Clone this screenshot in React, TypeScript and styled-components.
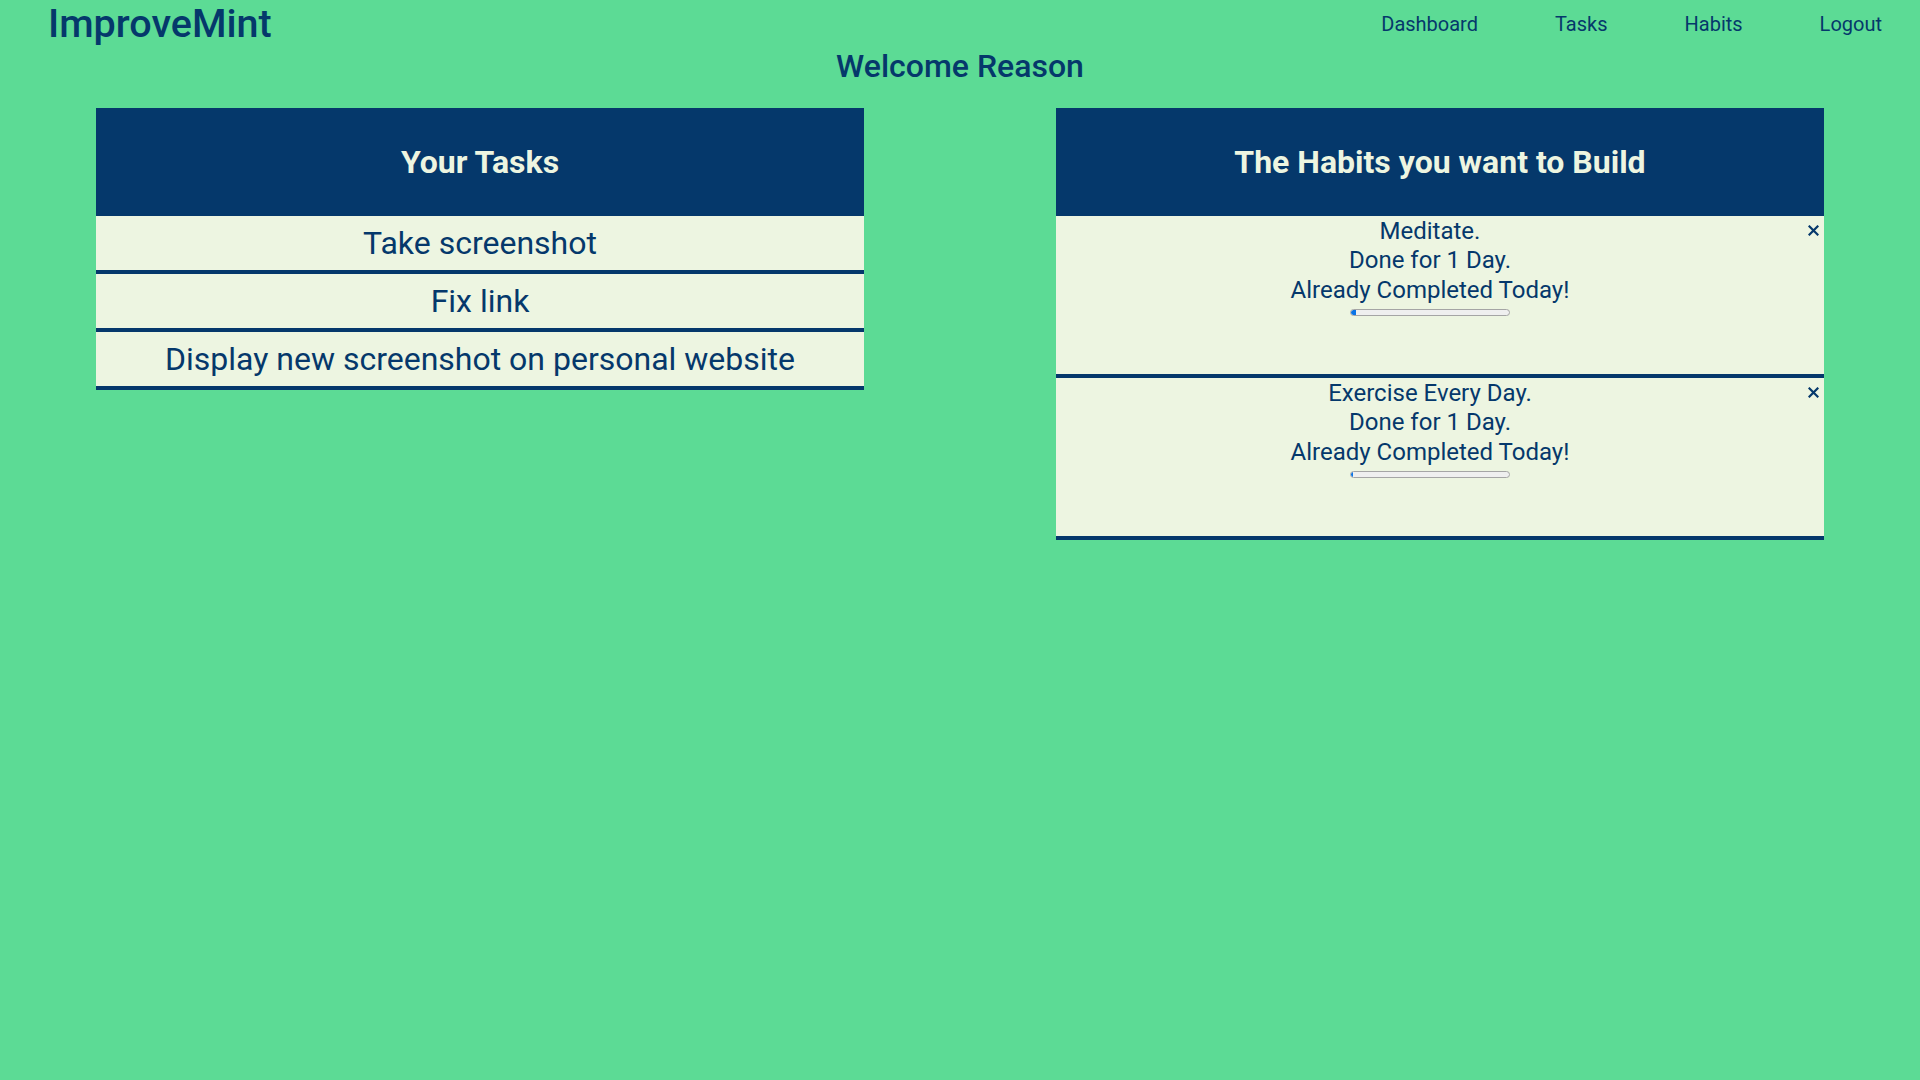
import React from "react";
import styled, { createGlobalStyle } from "styled-components";

const GlobalStyle = createGlobalStyle`
  html, body {
    margin: 0;
    padding: 0;
    background: #5cdb95;
    font-family: Roboto, "Liberation Sans", Arial, sans-serif;
    color: #05386b;
  }
  * { box-sizing: border-box; }
`;

const Page = styled.div`
  min-height: 1080px;
  display: flex;
  flex-direction: column;
`;

const NavBar = styled.nav`
  height: 48px;
  display: flex;
  align-items: center;
  justify-content: space-between;
  padding: 0 38px 0 48px;
`;

const Logo = styled.a`
  font-size: 39.5px;
  font-weight: 500;
  color: #05386b;
  text-decoration: none;
  line-height: 48px;
`;

const NavLinks = styled.div`
  display: flex;
  align-items: center;
  gap: 77px;
`;

const NavLink = styled.a`
  font-size: 20px;
  color: #05386b;
  text-decoration: none;
  line-height: 48px;
`;

const Welcome = styled.h2`
  margin: 0 0 23px 0;
  text-align: center;
  font-size: 32px;
  font-weight: 500;
  line-height: 37px;
`;

const Columns = styled.main`
  display: flex;
  justify-content: space-between;
  align-items: flex-start;
  padding: 0 5%;
`;

const Panel = styled.section`
  width: 768px;
  display: flex;
  flex-direction: column;
`;

const PanelHeader = styled.header`
  height: 108px;
  background: #05386b;
  color: #edf5e1;
  display: flex;
  align-items: center;
  justify-content: center;
  font-size: 32px;
  font-weight: 700;
`;

const TaskRow = styled.div`
  background: #edf5e1;
  border-bottom: 4px solid #05386b;
  text-align: center;
  font-size: 32px;
  line-height: 38px;
  padding: 8px 0;
`;

const HabitRow = styled.div`
  background: #edf5e1;
  border-bottom: 4px solid #05386b;
  height: 162px;
  display: flex;
  align-items: flex-start;
`;

const HabitBody = styled.div`
  flex: 1;
  display: flex;
  flex-direction: column;
  align-items: center;
  font-size: 24px;
  line-height: 29.4px;
  padding-top: 1px;
`;

const CloseButton = styled.button`
  width: 20px;
  height: 29px;
  padding: 0 1px 0 0;
  margin: 0;
  border: none;
  background: transparent;
  display: flex;
  align-items: center;
  justify-content: center;
  cursor: pointer;
  color: #05386b;
`;

const Progress = styled.div`
  width: 160px;
  height: 7px;
  margin-top: 4px;
  border: 1px solid #a5a5a5;
  border-radius: 4px;
  background: #efefef;
  overflow: hidden;
`;

const ProgressFill = styled.div`
  height: 100%;
  background: #0a74e6;
  border-radius: 3px 0 0 3px;
`;

const XIcon = () => (
  <svg width="11" height="11" viewBox="0 0 11 11">
    <path d="M1.5 1.5 L9.5 9.5 M9.5 1.5 L1.5 9.5" stroke="#05386b" strokeWidth="2.2" strokeLinecap="square" />
  </svg>
);

const tasks = ["Take screenshot", "Fix link", "Display new screenshot on personal website"];
const habits = [
  { name: "Meditate.", days: 1, progress: 0.03 },
  { name: "Exercise Every Day.", days: 1, progress: 0.012 },
];

export default function App() {
  return (
    <Page>
      <GlobalStyle />
      <NavBar>
        <Logo href="#">ImproveMint</Logo>
        <NavLinks>
          <NavLink href="#">Dashboard</NavLink>
          <NavLink href="#">Tasks</NavLink>
          <NavLink href="#">Habits</NavLink>
          <NavLink href="#">Logout</NavLink>
        </NavLinks>
      </NavBar>
      <Welcome>Welcome Reason</Welcome>
      <Columns>
        <Panel>
          <PanelHeader>Your Tasks</PanelHeader>
          {tasks.map((t) => (
            <TaskRow key={t}>{t}</TaskRow>
          ))}
        </Panel>
        <Panel>
          <PanelHeader>The Habits you want to Build</PanelHeader>
          {habits.map((h) => (
            <HabitRow key={h.name}>
              <HabitBody>
                <span>{h.name}</span>
                <span>Done for {h.days} Day.</span>
                <span>Already Completed Today!</span>
                <Progress>
                  <ProgressFill style={{ width: `${h.progress * 100}%` }} />
                </Progress>
              </HabitBody>
              <CloseButton aria-label="Delete habit">
                <XIcon />
              </CloseButton>
            </HabitRow>
          ))}
        </Panel>
      </Columns>
    </Page>
  );
}
